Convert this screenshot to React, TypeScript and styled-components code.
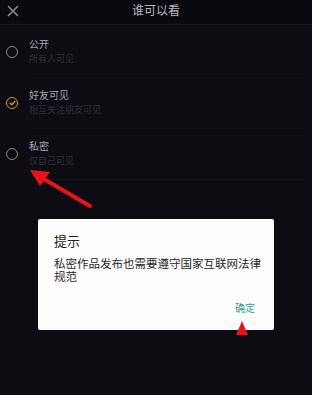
import React from 'react'
import styled, { createGlobalStyle } from 'styled-components'

const GlobalStyle = createGlobalStyle`
  html, body {
    margin: 0;
    padding: 0;
    background: #0d0c13;
  }
  body {
    font-family: "Noto Sans CJK SC", "Noto Sans", sans-serif;
  }
`

const options = [
  { title: '公开', sub: '所有人可见', checked: false },
  { title: '好友可见', sub: '相互关注朋友可见', checked: true },
  { title: '私密', sub: '仅自己可见', checked: false },
]

function App() {
  return (
    <Screen>
      <GlobalStyle />
      <Header>
        <CloseBtn>
          <svg width="12" height="12" viewBox="0 0 12 12">
            <path d="M1.5 1.5 L10.5 10.5 M10.5 1.5 L1.5 10.5" stroke="#8a8a90" strokeWidth="1.6" strokeLinecap="round" />
          </svg>
        </CloseBtn>
        <Title>谁可以看</Title>
      </Header>
      <List>
        {options.map(o => (
          <Item key={o.title}>
            <Radio checked={o.checked}>
              {o.checked && (
                <svg width="7" height="6" viewBox="0 0 7 6">
                  <path d="M0.8 3 L2.8 4.8 L6.2 1" fill="none" stroke="#c9a227" strokeWidth="1.3" />
                </svg>
              )}
            </Radio>
            <Texts>
              <ItemTitle>{o.title}</ItemTitle>
              <ItemSub>{o.sub}</ItemSub>
            </Texts>
          </Item>
        ))}
      </List>

      <Arrow width="70" height="45" viewBox="0 0 70 45">
        <path d="M62 40 L14 12" stroke="#e8141a" strokeWidth="4" strokeLinecap="round" />
        <path d="M2 4 L22 6 L12 20 Z" fill="#e8141a" />
      </Arrow>

      <Dialog>
        <DialogTitle>提示</DialogTitle>
        <DialogBody>私密作品发布也需要遵守国家互联网法律规范</DialogBody>
        <Actions>
          <OkBtn>确定</OkBtn>
        </Actions>
      </Dialog>

      <Marker width="14" height="14" viewBox="0 0 14 14">
        <path d="M7 0 L13 14 L1 14 Z" fill="#e8141a" />
      </Marker>
    </Screen>
  )
}

export default App

const Screen = styled.div`
  position: relative;
  width: 312px;
  height: 395px;
  overflow: hidden;
  background: #0d0c13;
`

const Header = styled.div`
  position: relative;
  height: 24px;
  display: flex;
  align-items: center;
  justify-content: center;
  background: #0a0910;
  border-bottom: 1px solid #15141c;
`

const CloseBtn = styled.div`
  position: absolute;
  left: 7px;
  top: 5px;
  width: 12px;
  height: 12px;
  display: flex;
`

const Title = styled.div`
  color: #b8b8bc;
  font-size: 12px;
  line-height: 14px;
  margin-top: -4px;
`

const List = styled.div`
  display: flex;
  flex-direction: column;
  padding-top: 1px;
`

const Item = styled.div`
  display: flex;
  align-items: center;
  height: 51px;
  padding-left: 6px;
`

const Radio = styled.div<{ checked: boolean }>`
  width: 10px;
  height: 10px;
  border-radius: 50%;
  border: 1px solid ${p => (p.checked ? '#c9a227' : '#8a8a8e')};
  display: flex;
  align-items: center;
  justify-content: center;
  flex-shrink: 0;
`

const Texts = styled.div`
  display: flex;
  flex-direction: column;
  margin-left: 11px;
  flex: 1;
  height: 100%;
  justify-content: center;
  gap: 3px;
  border-bottom: 1px solid #111018;
  margin-right: 8px;
`

const ItemTitle = styled.div`
  color: #a9a9ad;
  font-size: 10px;
  line-height: 12px;
`

const ItemSub = styled.div`
  color: #302f3a;
  font-size: 9px;
  line-height: 12px;
`

const Arrow = styled.svg`
  position: absolute;
  left: 28px;
  top: 166px;
`

const Dialog = styled.div`
  position: absolute;
  left: 38px;
  top: 219px;
  width: 236px;
  height: 111px;
  background: #fdfdfd;
  border-radius: 2px;
  box-sizing: border-box;
  padding: 13px 12px 0 16px;
  display: flex;
  flex-direction: column;
`

const DialogTitle = styled.div`
  color: #1e1e1e;
  font-size: 13px;
  line-height: 18px;
`

const DialogBody = styled.div`
  margin-top: 7px;
  color: #262626;
  font-size: 11.5px;
  line-height: 13px;
`

const Actions = styled.div`
  display: flex;
  justify-content: flex-end;
  margin-top: auto;
  padding-bottom: 16px;
  padding-right: 7px;
`

const OkBtn = styled.div`
  color: #2f9a9a;
  font-size: 10px;
  line-height: 12px;
`

const Marker = styled.svg`
  position: absolute;
  left: 235px;
  top: 321px;
`
